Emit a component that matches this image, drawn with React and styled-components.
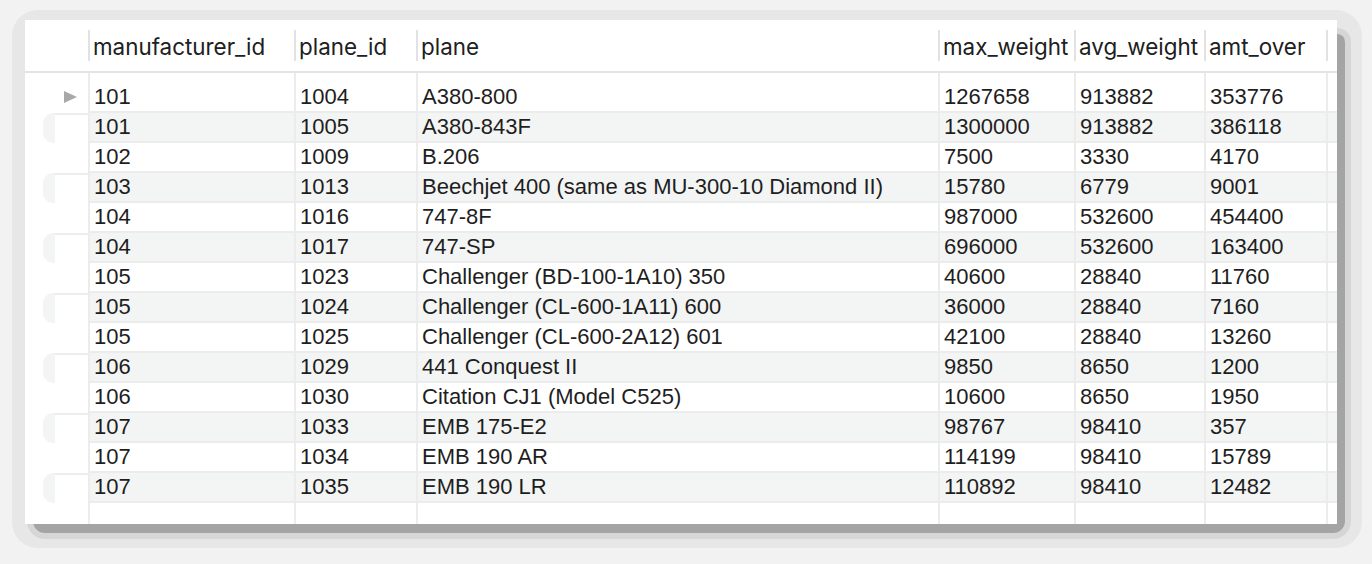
import React from 'react';
import styled, { createGlobalStyle } from 'styled-components';

const GlobalStyle = createGlobalStyle`
  html, body {
    margin: 0;
    padding: 0;
  }
  html {
    background: #f2f2f2;
  }
  body {
    font-family: "Liberation Sans", Arial, sans-serif;
    color: #1e1e1e;
  }
`;

const columns = ['manufacturer_id', 'plane_id', 'plane', 'max_weight', 'avg_weight', 'amt_over'];

const rows = [
  ['101', '1004', 'A380-800', '1267658', '913882', '353776'],
  ['101', '1005', 'A380-843F', '1300000', '913882', '386118'],
  ['102', '1009', 'B.206', '7500', '3330', '4170'],
  ['103', '1013', 'Beechjet 400 (same as MU-300-10 Diamond II)', '15780', '6779', '9001'],
  ['104', '1016', '747-8F', '987000', '532600', '454400'],
  ['104', '1017', '747-SP', '696000', '532600', '163400'],
  ['105', '1023', 'Challenger (BD-100-1A10) 350', '40600', '28840', '11760'],
  ['105', '1024', 'Challenger (CL-600-1A11) 600', '36000', '28840', '7160'],
  ['105', '1025', 'Challenger (CL-600-2A12) 601', '42100', '28840', '13260'],
  ['106', '1029', '441 Conquest II', '9850', '8650', '1200'],
  ['106', '1030', 'Citation CJ1 (Model C525)', '10600', '8650', '1950'],
  ['107', '1033', 'EMB 175-E2', '98767', '98410', '357'],
  ['107', '1034', 'EMB 190 AR', '114199', '98410', '15789'],
  ['107', '1035', 'EMB 190 LR', '110892', '98410', '12482'],
];

const App = () => {
  return (
    <>
      <GlobalStyle />
      <Page>
        <Frame>
          <Card>
            <HeaderRow>
              <HeadCorner />
              {columns.map((c) => (
                <HeadCell key={c}>{c}</HeadCell>
              ))}
              <HeadCell />
            </HeaderRow>
            <Body>
              <GridRow $height={10}>
                <RowHead />
                {columns.map((c) => (
                  <Cell key={c} />
                ))}
                <Cell />
              </GridRow>
              {rows.map((r, i) => {
                const striped = i % 2 === 1;
                return (
                  <GridRow key={r[1]} $height={30}>
                    <RowHead>
                      {i === 0 && <Arrow />}
                      {striped && (
                        <Pill>
                          <PillInner />
                        </Pill>
                      )}
                    </RowHead>
                    {r.map((v, j) => (
                      <Cell key={j} $striped={striped} $lined>
                        {v}
                      </Cell>
                    ))}
                    <Cell $striped={striped} $lined />
                  </GridRow>
                );
              })}
              <GridRow $height={21}>
                <RowHead />
                {columns.map((c) => (
                  <Cell key={c} />
                ))}
                <Cell />
              </GridRow>
            </Body>
          </Card>
        </Frame>
      </Page>
    </>
  );
};

export default App;

const grid = '63px 206px 122px 522px 136px 130px 122px 11px';

const Page = styled.div`
  padding: 20px 0 0 25px;
  height: 564px;
  box-sizing: border-box;
  overflow: hidden;
`;

/* window shadow: light halo, mid band and dark drop, all behind the card */
const Frame = styled.div`
  position: relative;
  isolation: isolate;
  width: 1312px;
  height: 504px;

  &::before {
    content: '';
    position: absolute;
    left: -13px;
    top: -10px;
    right: -25px;
    bottom: -24px;
    border-radius: 26px;
    background: #e7e7e7;
    z-index: -2;
  }

  &::after {
    content: '';
    position: absolute;
    left: 8px;
    top: 14px;
    right: -8px;
    bottom: -9px;
    border-radius: 4px 8px 12px 12px;
    background: #a4a4a4;
    box-shadow: 0 0 0 6px #d6d6d6;
    z-index: -1;
  }
`;

const Card = styled.div`
  position: relative;
  width: 100%;
  height: 100%;
  background: #fff;
`;

const HeaderRow = styled.div`
  display: grid;
  grid-template-columns: ${grid};
  height: 53px;
  border-bottom: 2px solid #e4e4e4;
  box-sizing: border-box;
`;

const HeadCorner = styled.div``;

const HeadCell = styled.div`
  position: relative;
  display: flex;
  align-items: center;
  padding-left: 5px;
  padding-top: 2px;
  font-family: Inter, "Liberation Sans", sans-serif;
  font-size: 22.4px;
  color: #202020;
  white-space: nowrap;
  overflow: hidden;

  &::before {
    content: '';
    position: absolute;
    left: 0;
    top: 10px;
    bottom: 10px;
    width: 2px;
    background: #e2e2e2;
  }
`;

const Body = styled.div`
  display: flex;
  flex-direction: column;
`;

const GridRow = styled.div`
  display: grid;
  grid-template-columns: ${grid};
  height: ${(p) => p.$height}px;
`;

const RowHead = styled.div`
  position: relative;
  display: flex;
  align-items: stretch;
  padding-left: 18px;
`;

/* current-row marker */
const Arrow = styled.span`
  position: absolute;
  left: 39px;
  top: 8px;
  width: 0;
  height: 0;
  border-left: 13px solid #a8a8a8;
  border-top: 6px solid transparent;
  border-bottom: 6px solid transparent;
`;

const Pill = styled.div`
  flex: 1;
  display: flex;
  background: #f3f4f4;
  border-radius: 10px 0 0 10px;
  padding-left: 12px;
`;

const PillInner = styled.div`
  flex: 1;
  background: #fff;
  border-top: 2px solid #ececec;
`;

const Cell = styled.div`
  display: flex;
  align-items: center;
  padding-left: 4px;
  font-size: 22px;
  white-space: nowrap;
  overflow: hidden;
  box-sizing: border-box;
  border-left: 2px solid #ececec;
  background: ${(p) => (p.$striped ? '#f3f4f4' : '#fff')};
  border-bottom: ${(p) => (p.$lined ? '2px solid #ececec' : 'none')};
`;
